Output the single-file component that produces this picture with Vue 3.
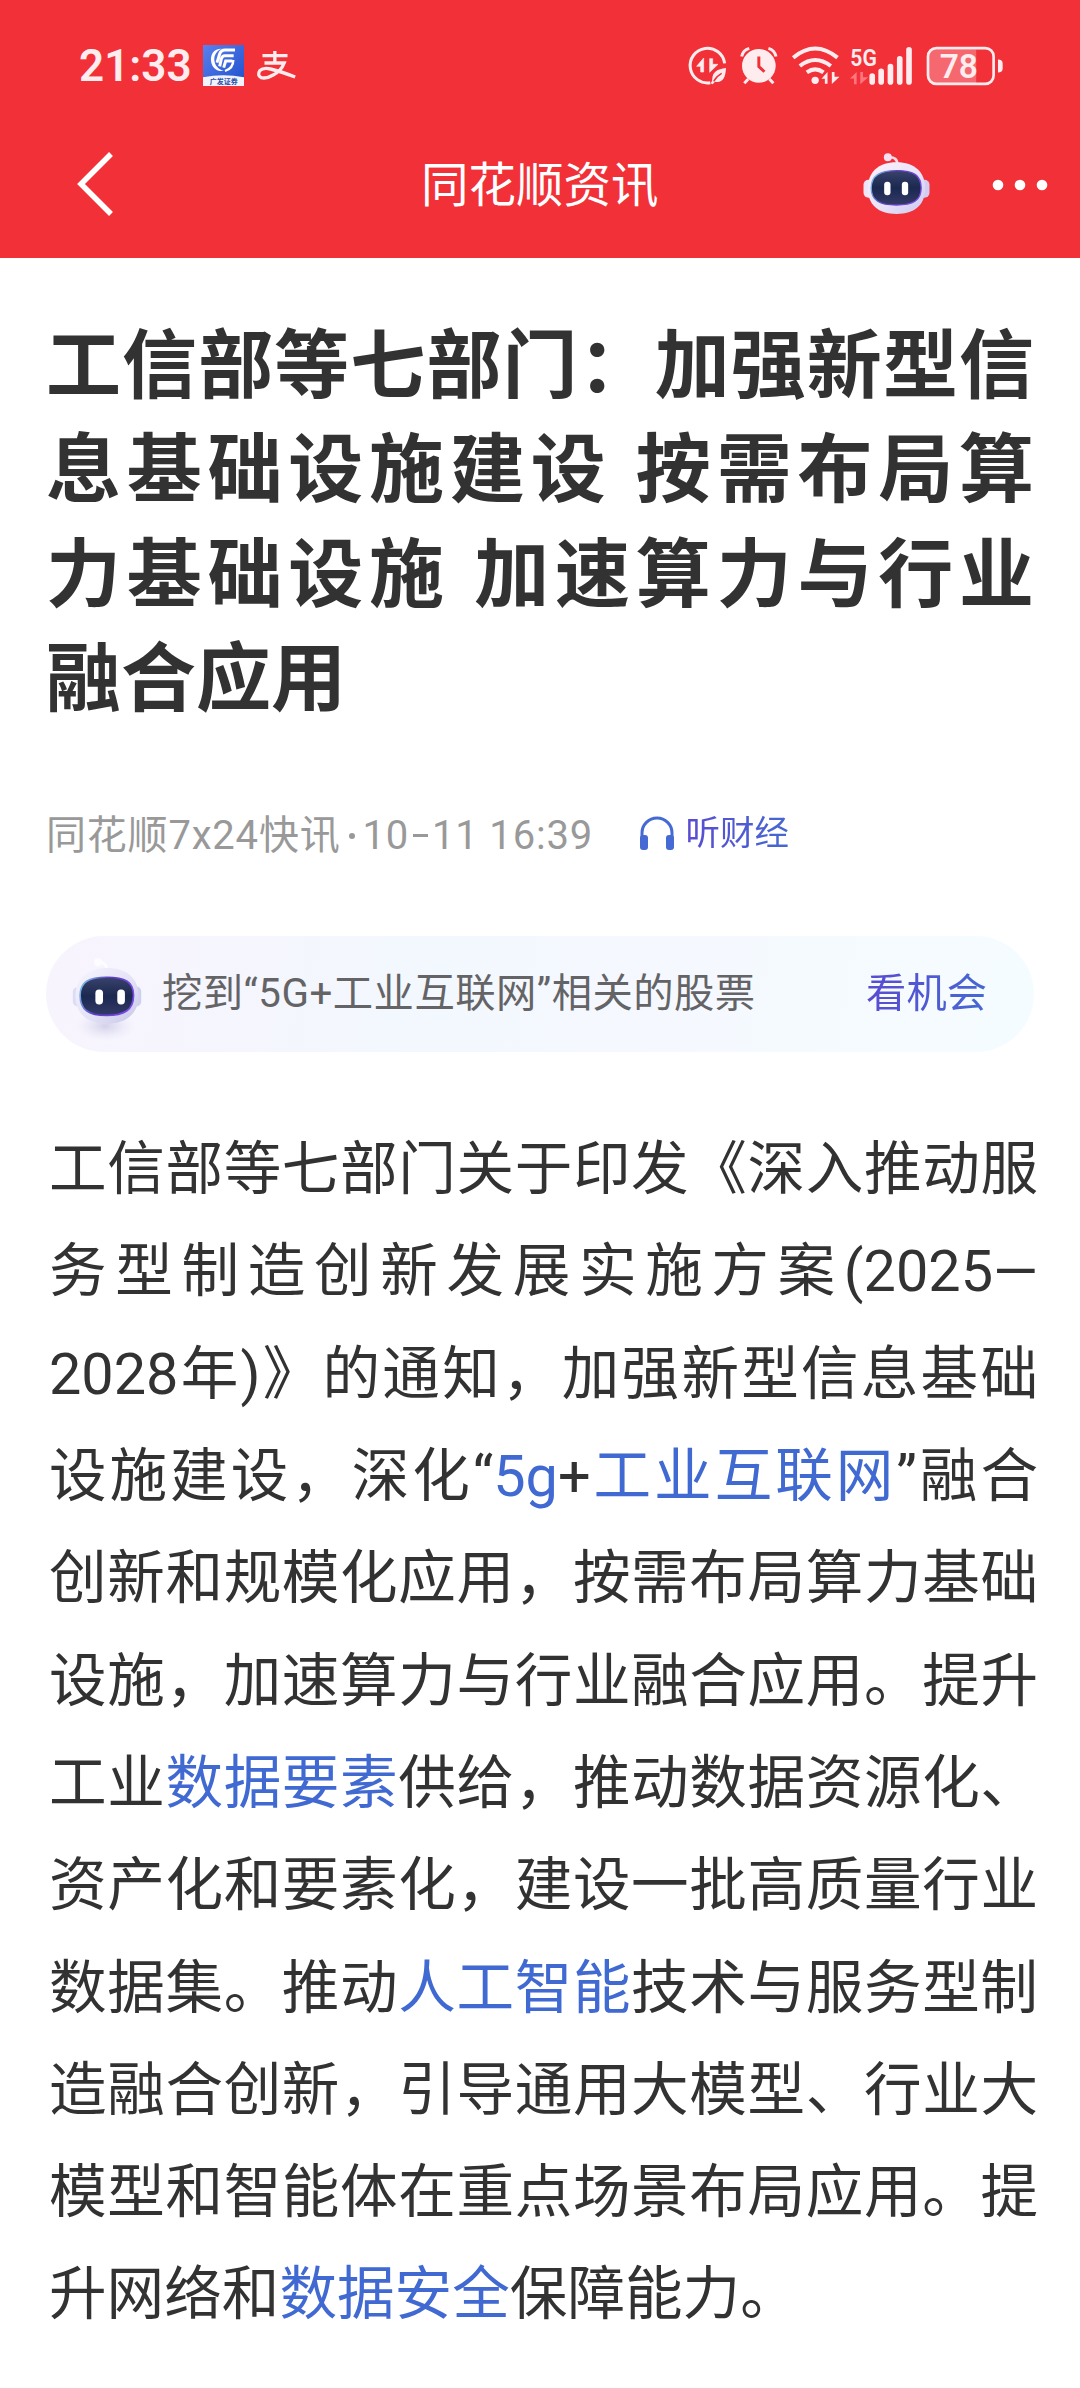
<template>
  <div class="page">
    <header class="header">
      <div class="status">
        <span class="time">21:33</span>
        <svg class="gf" viewBox="0 0 123 123">
          <defs>
            <linearGradient id="gf-bg" x1="0" y1="0" x2="1" y2="1">
              <stop offset="0" stop-color="#5c80ee" />
              <stop offset="1" stop-color="#1c4fcb" />
            </linearGradient>
          </defs>
          <rect width="123" height="123" fill="url(#gf-bg)" />
          <path d="M0 97Q61 84 123 97V123H0Z" fill="#f3f4fb" />
          <path d="M56 11C34 10 22 27 24 47C26 67 40 80 62 78C46 72 35 62 34 45C33 29 42 17 56 11Z" fill="#fff" />
          <path d="M96 15H66Q54 15 50 27L42 53M92 32H65Q58 32 55 42L50 64M88 48H68L62 68" fill="none" stroke="#fff" stroke-width="9" />
          <path d="M91 45Q91 70 66 78" fill="none" stroke="#fff" stroke-width="7" />
          <text x="62" y="117" text-anchor="middle" class="gf-text">广发证券</text>
        </svg>
        <svg class="alipay" viewBox="0 0 116 90">
          <path d="M16 14H91M53 0V36M22 36H81Q72 60 48 72Q28 84 12 80Q-1 72 8 59Q18 49 40 54Q72 62 114 78" />
        </svg>

        <div class="status-icons">
          <svg class="saver" viewBox="54 46 117 117">
            <path d="M164 98A52 52 0 1 0 121 156" fill="none" stroke="#ffecee" stroke-width="9" />
            <path d="M80 107L101 82V124H92V107ZM119 84H128V101H144L119 125Z" fill="#ffecee" stroke="#ffecee" stroke-width="2" />
            <path d="M168 112Q128 116 127 143Q128 149 122 158L128 161L135 153Q166 160 168 112Z" fill="#ffecee" />
            <path d="M131 152Q139 137 155 128" fill="none" stroke="#f23038" stroke-width="4" />
          </svg>
          <svg class="alarm" viewBox="212 46 113 115">
            <circle cx="268" cy="103" r="51" fill="#ffecee" />
            <path d="M216 75Q220 55 239 50M320 75Q316 55 297 50M236 143L224 156M300 143L312 156" class="alarm-line" />
            <path d="M268 75V105L285 121" fill="none" stroke="#f23038" stroke-width="9" />
          </svg>
          <svg class="wifi" viewBox="366 44 146 117">
            <path d="M372 79Q438 24 505 79M392 104Q438 68 485 104M413 123Q438 105 463 123" fill="none" stroke="#ffecee" stroke-width="12" />
            <circle cx="438" cy="147" r="11" fill="#ffecee" />
            <path d="M457 142L475 122V157H467V142ZM488 122H496V136H511L488 158Z" fill="#ffecee" />
          </svg>
          <svg class="signal" viewBox="540 44 190 117">
            <text x="541" y="103" class="five-g" textLength="80" lengthAdjust="spacingAndGlyphs">5G</text>
            <path d="M540 142L560 122V159H552V142ZM571 122H579V138H595L571 159Z" fill="#ff7680" />
            <path d="M607 134V152M634 120V152M662 106V152M690 82V152M718 55V152" fill="none" stroke="#ffecee" stroke-width="17" stroke-linecap="round" />
          </svg>
          <svg class="battery" viewBox="770 44 230 119">
            <path d="M795 54H920V154H795Q779 154 779 138V70Q779 54 795 54Z" fill="#f6686f" />
            <rect x="776" y="50" width="196" height="107" rx="25" fill="none" stroke="#ffecee" stroke-width="8" />
            <path d="M985 84Q999 84 999 96V111Q999 123 985 123Z" fill="#ffecee" />
            <text x="868" y="139" text-anchor="middle" class="battery-text">78</text>
          </svg>
        </div>
      </div>

      <nav class="nav">
        <svg class="back" viewBox="0 0 40 66">
          <path d="M36 3L6 33L36 63" />
        </svg>
        <h1 class="nav-title">同花顺资讯</h1>
        <svg class="robot" viewBox="0 0 200 186">
          <defs>
            <linearGradient id="shell" x1="0" y1="0" x2="1" y2="1">
              <stop offset="0" stop-color="#fdf2fa" />
              <stop offset="0.55" stop-color="#e9e2f8" />
              <stop offset="1" stop-color="#c9c8f0" />
            </linearGradient>
            <linearGradient id="rim" x1="0" y1="0" x2="1" y2="0.3">
              <stop offset="0" stop-color="#7fd0ee" />
              <stop offset="0.5" stop-color="#5a3cc0" />
              <stop offset="1" stop-color="#7b4be8" />
            </linearGradient>
            <linearGradient id="face" x1="0" y1="0" x2="0" y2="1">
              <stop offset="0" stop-color="#39426b" />
              <stop offset="0.5" stop-color="#1b2850" />
              <stop offset="1" stop-color="#343a68" />
            </linearGradient>
          </defs>
          <path d="M74 13Q104 10 102 36" fill="none" stroke="#fbdcea" stroke-width="8" />
          <circle cx="74" cy="13" r="12" fill="#f6dff0" />
          <rect x="1" y="80" width="32" height="54" rx="15" fill="#efe5f8" />
          <rect x="167" y="80" width="32" height="54" rx="15" fill="#d2cbf2" />
          <path d="M100 28C155 28 186 58 186 106C186 156 155 183 100 183C45 183 14 156 14 106C14 58 45 28 100 28Z" fill="url(#shell)" />
          <path d="M100 53C153 53 174 67 174 105C174 143 150 156 100 156C50 156 24 143 24 105C24 67 50 53 100 53Z" fill="url(#face)" stroke="url(#rim)" stroke-width="4" />
          <rect x="63" y="86" width="19" height="41" rx="9" fill="#fff" />
          <rect x="116" y="86" width="19" height="41" rx="9" fill="#fff" />
        </svg>
        <svg class="more" viewBox="0 0 56 12">
          <circle cx="6" cy="6" r="5.3" />
          <circle cx="28" cy="6" r="5.3" />
          <circle cx="50" cy="6" r="5.3" />
        </svg>
      </nav>
    </header>

    <main class="article">
      <h2 class="title">
        <span v-for="line in titleLines" :key="line" class="line">{{ line }}</span>
      </h2>

      <div class="meta">
        <span class="source">同花顺7x24快讯</span>
        <span class="dot"></span>
        <span class="date">10<i class="dash"></i>11 16:39</span>
        <a class="listen">
          <svg class="headphones" viewBox="0 0 36 34">
            <path d="M3 22V17A15 15 0 0 1 33 17V22" fill="none" stroke="#466ad4" stroke-width="3" />
            <rect x="1" y="19" width="8" height="15" rx="3" fill="#466ad4" />
            <rect x="27" y="19" width="8" height="15" rx="3" fill="#466ad4" />
          </svg>
          <span class="gradient-text">听财经</span>
        </a>
      </div>

      <div class="chance">
        <svg class="chance-robot" viewBox="0 0 210 250">
          <defs>
            <radialGradient id="shade">
              <stop offset="0" stop-color="#b9b8dc" stop-opacity="0.6" />
              <stop offset="1" stop-color="#dcdcf2" stop-opacity="0" />
            </radialGradient>
            <linearGradient id="pale" x1="0" y1="0" x2="1" y2="1">
              <stop offset="0" stop-color="#f7f5fe" />
              <stop offset="0.6" stop-color="#e2e0f5" />
              <stop offset="1" stop-color="#c5c5ea" />
            </linearGradient>
          </defs>
          <ellipse cx="100" cy="205" rx="90" ry="45" fill="url(#shade)" />
          <path d="M78 12Q104 12 104 36" fill="none" stroke="#fdfcff" stroke-width="8" />
          <circle cx="78" cy="13" r="12" fill="#fdfcff" />
          <rect x="2" y="88" width="30" height="58" rx="14" fill="#dddcf6" />
          <rect x="180" y="86" width="28" height="60" rx="14" fill="#d0cff0" />
          <path d="M104 30C166 30 200 62 200 114C200 170 160 198 104 198C48 198 10 170 10 114C10 62 45 30 104 30Z" fill="url(#pale)" />
          <path d="M104 58C160 58 185 72 185 112C185 158 156 173 104 173C52 173 24 158 24 112C24 72 50 58 104 58Z" fill="url(#face)" stroke="url(#rim)" stroke-width="5" />
          <rect x="70" y="95" width="23" height="45" rx="11" fill="#fff" />
          <rect x="136" y="95" width="23" height="45" rx="11" fill="#fff" />
        </svg>
        <span class="chance-text">挖到“5G+工业互联网”相关的股票</span>
        <a class="chance-link gradient-text">看机会</a>
      </div>

      <p class="content">
        <span v-for="(line, i) in contentLines" :key="i" class="line"><template v-for="(part, j) in line" :key="j"><a v-if="part.keyword" class="keyword">{{ part.keyword }}</a><template v-else>{{ part }}</template></template></span>
      </p>
    </main>
  </div>
</template>

<script setup>
const titleLines = [
  '工信部等七部门：加强新型信',
  '息基础设施建设 按需布局算',
  '力基础设施 加速算力与行业',
  '融合应用',
]

const contentLines = [
  ['工信部等七部门关于印发《深入推动服'],
  ['务型制造创新发展实施方案(2025—'],
  ['2028年)》的通知，加强新型信息基础'],
  ['设施建设，深化“', { keyword: '5g' }, '+', { keyword: '工业互联网' }, '”融合'],
  ['创新和规模化应用，按需布局算力基础'],
  ['设施，加速算力与行业融合应用。提升'],
  ['工业', { keyword: '数据要素' }, '供给，推动数据资源化、'],
  ['资产化和要素化，建设一批高质量行业'],
  ['数据集。推动', { keyword: '人工智能' }, '技术与服务型制'],
  ['造融合创新，引导通用大模型、行业大'],
  ['模型和智能体在重点场景布局应用。提'],
  ['升网络和', { keyword: '数据安全' }, '保障能力。'],
]
</script>

<style>
body {
  background: #fff;
}
</style>

<style scoped>
.page {
  width: 1080px;
  height: 2388px;
  overflow: hidden;
  background: #fff;
  font-family: Roboto, "Noto Sans CJK SC", sans-serif;
  color: #323232;
  text-spacing-trim: space-all;
}
svg {
  display: block;
  flex: none;
  overflow: visible;
}
.header {
  height: 258px;
  background: #f23038;
  color: #fff;
}
.status {
  display: flex;
  align-items: center;
  height: 131px;
  padding: 0 77px 0 79px;
}
.time {
  width: 124px;
  font-size: 44px;
  font-weight: 600;
  line-height: 60px;
  color: #ffecee;
}
.gf {
  width: 41px;
  height: 41px;
}
.gf-text {
  font-size: 21px;
  font-weight: 700;
  fill: #2a4fa8;
}
.alipay {
  width: 39px;
  height: 30px;
  margin-left: 13px;
}
.alipay path {
  fill: none;
  stroke: #ffecee;
  stroke-width: 10;
}
.status-icons {
  display: flex;
  align-items: center;
  margin-left: auto;
}
.saver {
  width: 39px;
  height: 39px;
}
.alarm {
  width: 38px;
  height: 38px;
  margin-left: 13px;
}
.alarm-line {
  fill: none;
  stroke: #ffecee;
  stroke-width: 9;
}
.wifi {
  width: 49px;
  height: 39px;
  margin-left: 13px;
}
.signal {
  width: 63px;
  height: 39px;
  margin-left: 10px;
}
.five-g {
  font-size: 74px;
  font-weight: 600;
  fill: #ffecee;
}
.battery {
  width: 77px;
  height: 40px;
  margin-left: 13px;
}
.battery-text {
  font-size: 100px;
  font-weight: 600;
  fill: #ffecee;
}
.nav {
  display: grid;
  grid-template-columns: 40px 1fr 67px 62px 56px;
  align-items: center;
  height: 105px;
  padding: 0 32px 0 75px;
}
.back {
  width: 40px;
  height: 66px;
}
.back path {
  fill: none;
  stroke: #fff;
  stroke-width: 5.5;
}
.nav-title {
  margin: 5px 0 0 306px;
  font-size: 47.5px;
  font-weight: 400;
  line-height: 70px;
  white-space: nowrap;
}
.robot {
  width: 67px;
  height: 62px;
}
.more {
  grid-column: 5;
  width: 56px;
  height: 12px;
  margin-top: 2px;
  fill: #fff;
}
.article {
  padding: 56px 46px 0;
}
.line {
  display: block;
  white-space: nowrap;
  text-align: justify;
  text-align-last: justify;
}
.line:last-child {
  text-align-last: left;
}
.title {
  margin: 0;
  font-size: 75px;
  font-weight: 700;
  line-height: 104.3px;
}
.meta {
  display: flex;
  align-items: center;
  height: 60px;
  margin-top: 75px;
  font-size: 40px;
  line-height: 60px;
  color: #999;
}
.source {
  letter-spacing: 0.8px;
}
.dot {
  width: 6px;
  height: 6px;
  margin: 0 8px;
  border-radius: 50%;
  background: #999;
}
.date {
  letter-spacing: 0.8px;
  white-space: nowrap;
}
.dash {
  display: inline-block;
  width: 15px;
  height: 3px;
  margin: 0 4px 12px;
  background: #999;
}
.listen {
  display: flex;
  align-items: center;
  gap: 11px;
  margin-left: auto;
  margin-right: 245px;
  margin-bottom: 7px;
  font-size: 34.5px;
}
.headphones {
  width: 36px;
  height: 34px;
}
.gradient-text {
  background: linear-gradient(90deg, #5a4bd2, #4668d2);
  background-clip: text;
  color: transparent;
}
.chance {
  display: flex;
  align-items: center;
  height: 116px;
  margin-top: 70px;
  padding: 0 47px 0 26px;
  border-radius: 58px;
  background: linear-gradient(100deg, #f8f4fd, #f3f7fe 35%, #f5f9ff 65%, #f5fcff);
  font-size: 40.3px;
}
.chance-robot {
  width: 70px;
  height: 83px;
  margin-top: 10px;
}
.chance-text {
  margin: 0 0 10px 20px;
  letter-spacing: 0.5px;
  color: #646466;
}
.chance-link {
  margin: 0 0 10px auto;
}
.content {
  margin: 67px -4px 0 3px;
  font-size: 57.6px;
  line-height: 102.3px;
}
.keyword {
  color: #4169d2;
}
</style>
